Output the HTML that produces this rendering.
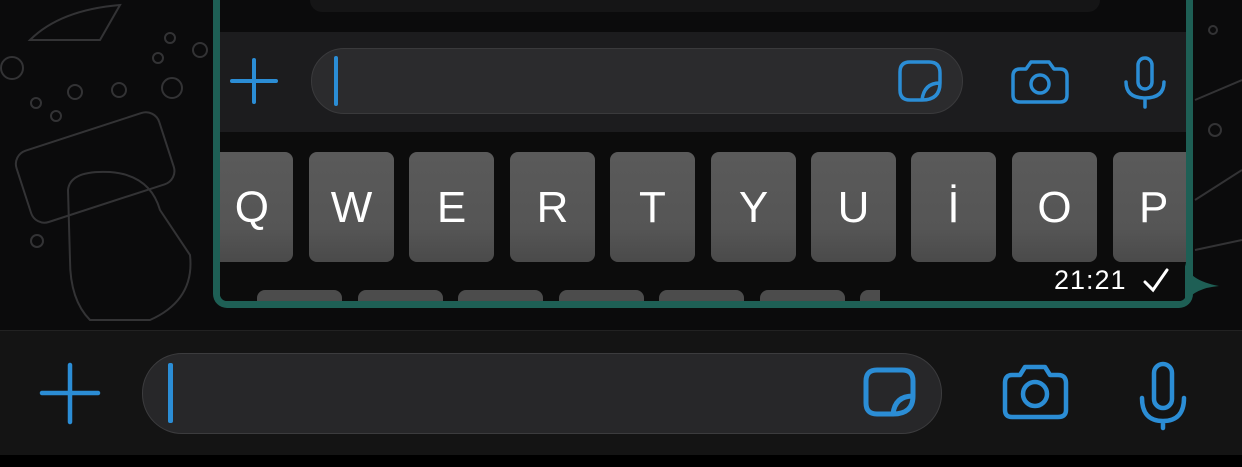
<!DOCTYPE html>
<html><head><meta charset="utf-8"><style>
*{margin:0;padding:0;box-sizing:border-box}
body{width:1242px;height:467px;overflow:hidden;background:#0b0b0c;position:relative;font-family:"Liberation Sans","DejaVu Sans",sans-serif}
.abs{position:absolute}
.bubble{left:213px;top:0;width:980px;height:308px;border:7px solid #1e5f55;border-top:none;border-radius:0 0 14px 14px;overflow:hidden;background:#0b0b0c}
.key{position:absolute;top:152px;width:85px;height:110px;border-radius:8px;color:#fff;font-size:44px;text-align:center;line-height:112px;background:linear-gradient(#5a5a5a,#555 70%,#4a4a4a)}
.key2{position:absolute;top:290px;width:85px;height:30px;background:#4c4c4c;border-radius:8px}
</style></head><body>
<svg class="abs" style="left:0;top:0" width="1242" height="330" fill="none" stroke="#333335" stroke-width="2">
<circle cx="12" cy="68" r="11"/><circle cx="75" cy="92" r="7"/><circle cx="36" cy="103" r="5"/><circle cx="56" cy="116" r="5"/><circle cx="119" cy="90" r="7"/><circle cx="172" cy="88" r="10"/><circle cx="158" cy="58" r="5"/><circle cx="170" cy="38" r="5"/><circle cx="200" cy="50" r="7"/><circle cx="37" cy="241" r="6"/>
<rect x="20" y="130" width="150" height="75" rx="14" transform="rotate(-18 95 167)"/>
<path d="M68 190 Q70 170 110 172 Q150 175 160 210 L190 255 Q195 300 150 320 L90 320 Q70 300 70 260 Z"/>
<path d="M30 40 Q60 10 120 5 L100 40 Z"/>
<circle cx="1215" cy="130" r="6"/><circle cx="1213" cy="30" r="4"/><path d="M1195 200 L1242 170 M1195 250 L1242 240 M1195 100 L1242 80"/>
</svg>
<div class="abs bubble">
 <div class="abs" style="left:0;top:32px;width:966px;height:100px;background:#1c1c1e"></div>
 <div class="abs" style="left:0;top:132px;width:966px;height:200px;background:#0c0c0c"></div>
 <div class="abs" style="left:90px;top:0;width:790px;height:12px;border-radius:0 0 16px 16px;background:#151516"></div>
 <div class="abs" style="left:91px;top:48px;width:652px;height:66px;border-radius:33px;background:#2b2b2d;border:1px solid #3a3a3c"></div>
 <div class="abs" style="left:114px;top:56px;width:4px;height:50px;background:#2b8dd5;border-radius:2px"></div>
 <svg class="abs" style="left:0;top:0" width="966" height="140" fill="none" stroke="#2b8dd5" stroke-width="3.5" stroke-linecap="round" stroke-linejoin="round">
  <path d="M34 60 V102 M12 81 H56" stroke-width="4"/>
  <g transform="translate(0,51)">
  <path d="M702 49 H690 Q680 49 680 39 V21 Q680 11 690 11 H709 Q720 11 720 22 V32 Q720 49 702 49 Z M720 32 Q704 32 702 49"/>
  </g>
  <path d="M800 69 H806 L811 62 H829 L834 69 H840 Q847 69 847 76 V95 Q847 102 840 102 H800 Q793 102 793 95 V76 Q793 69 800 69 Z"/><circle cx="820" cy="84" r="9"/>
  <g transform="translate(0,51)">
  <rect x="918" y="7" width="14" height="31" rx="7"/><path d="M906 31 Q906 47 925 47 Q944 47 944 31 M925 47 V56"/>
  </g>
 </svg>
 <div class="key" style="left:-12px;text-align:right;padding-right:24px">Q</div>
 <div class="key" style="left:89px">W</div>
 <div class="key" style="left:189px">E</div>
 <div class="key" style="left:290px">R</div>
 <div class="key" style="left:390px">T</div>
 <div class="key" style="left:491px">Y</div>
 <div class="key" style="left:591px">U</div>
 <div class="key" style="left:691px">İ</div>
 <div class="key" style="left:792px">O</div>
 <div class="key" style="left:893px;text-align:left;padding-left:26px">P</div>
 <div class="key2" style="left:37px"></div><div class="key2" style="left:138px"></div><div class="key2" style="left:238px"></div><div class="key2" style="left:339px"></div><div class="key2" style="left:439px"></div><div class="key2" style="left:540px"></div><div class="key2" style="left:640px"></div><div class="key2" style="left:741px"></div>
 <div class="abs" style="left:660px;top:262px;width:306px;height:60px;background:linear-gradient(rgba(12,12,12,0),#0c0c0c 35%)"></div>
 <div class="abs" style="left:834px;top:265px;color:#fff;font-size:27px;letter-spacing:1px">21:21</div>
 <svg class="abs" style="left:922px;top:266px" width="30" height="28" fill="none" stroke="#fff" stroke-width="3" stroke-linecap="round"><path d="M3 16 L11 24 L25 4"/></svg>
</div>
<svg class="abs" style="left:1185px;top:262px" width="40" height="40"><path d="M0 0 Q2 18 34 24 Q10 26 0 40 Z" fill="#1e5f55"/></svg>
<div class="abs" style="left:0;top:330px;width:1242px;height:125px;background:#141414;border-top:1px solid #222"></div>
<div class="abs" style="left:0;top:455px;width:1242px;height:12px;background:#000"></div>
<div class="abs" style="left:142px;top:353px;width:800px;height:81px;border-radius:40px;background:#272729;border:1px solid #3c3c3e"></div>
<div class="abs" style="left:168px;top:363px;width:5px;height:60px;background:#2b8dd5;border-radius:2px"></div>
<svg class="abs" style="left:0;top:330px" width="1242" height="125" fill="none" stroke="#2b8dd5" stroke-width="4.5" stroke-linecap="round" stroke-linejoin="round">
 <path d="M70 35 V92 M42 63 H98"/>
 <path d="M885 84 H877 Q866 84 866 73 V51 Q866 40 877 40 H902 Q913 40 913 51 V66 Q913 84 893 84 Z M913 66 Q895 66 893 84" stroke-width="5"/>
 <path d="M1012 45 H1020 L1025 37 H1045 L1050 45 H1058 Q1066 45 1066 53 V80 Q1066 87 1058 87 H1012 Q1005 87 1005 80 V53 Q1005 45 1012 45 Z"/><circle cx="1035" cy="64" r="12"/>
 <rect x="1154" y="34" width="18" height="44" rx="9"/><path d="M1142 68 Q1142 91 1163 91 Q1184 91 1184 68 M1163 91 V98"/>
</svg>
</body></html>
